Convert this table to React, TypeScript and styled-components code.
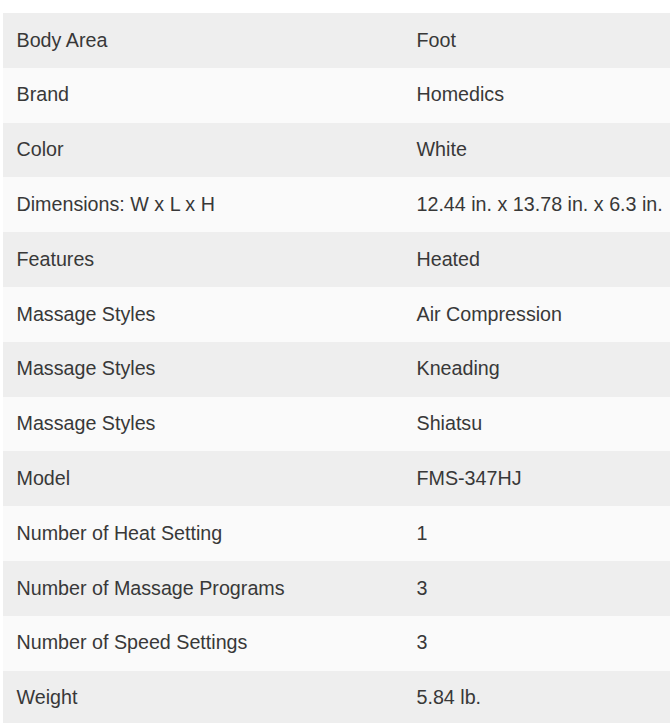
import React from "react";
import styled, { createGlobalStyle } from "styled-components";

const Global = createGlobalStyle`
  html, body { margin: 0; padding: 0; background: #ffffff; }
  body { font-family: "Liberation Sans", Arial, sans-serif; }
`;

const Page = styled.div`
  padding: 13px 0 0 3px;
  overflow: hidden;
`;

const Table = styled.div`
  display: flex;
  flex-direction: column;
  width: 667px;
`;

const Row = styled.div<{ $shade: boolean }>`
  display: grid;
  grid-template-columns: 400px 1fr;
  height: 54.8px;
  align-items: center;
  background: ${(p) => (p.$shade ? "#eeeeee" : "#fafafa")};
`;

const Cell = styled.div`
  padding-left: 13.5px;
  font-size: 19.7px;
  color: #383838;
  white-space: nowrap;
  line-height: 1;
`;

const rows: [string, string][] = [
  ["Body Area", "Foot"],
  ["Brand", "Homedics"],
  ["Color", "White"],
  ["Dimensions: W x L x H", "12.44 in. x 13.78 in. x 6.3 in."],
  ["Features", "Heated"],
  ["Massage Styles", "Air Compression"],
  ["Massage Styles", "Kneading"],
  ["Massage Styles", "Shiatsu"],
  ["Model", "FMS-347HJ"],
  ["Number of Heat Setting", "1"],
  ["Number of Massage Programs", "3"],
  ["Number of Speed Settings", "3"],
  ["Weight", "5.84 lb."],
];

export default function App() {
  return (
    <>
      <Global />
      <Page>
        <Table>
          {rows.map(([k, v], i) => (
            <Row key={i} $shade={i % 2 === 0}>
              <Cell>{k}</Cell>
              <Cell>{v}</Cell>
            </Row>
          ))}
        </Table>
      </Page>
    </>
  );
}
